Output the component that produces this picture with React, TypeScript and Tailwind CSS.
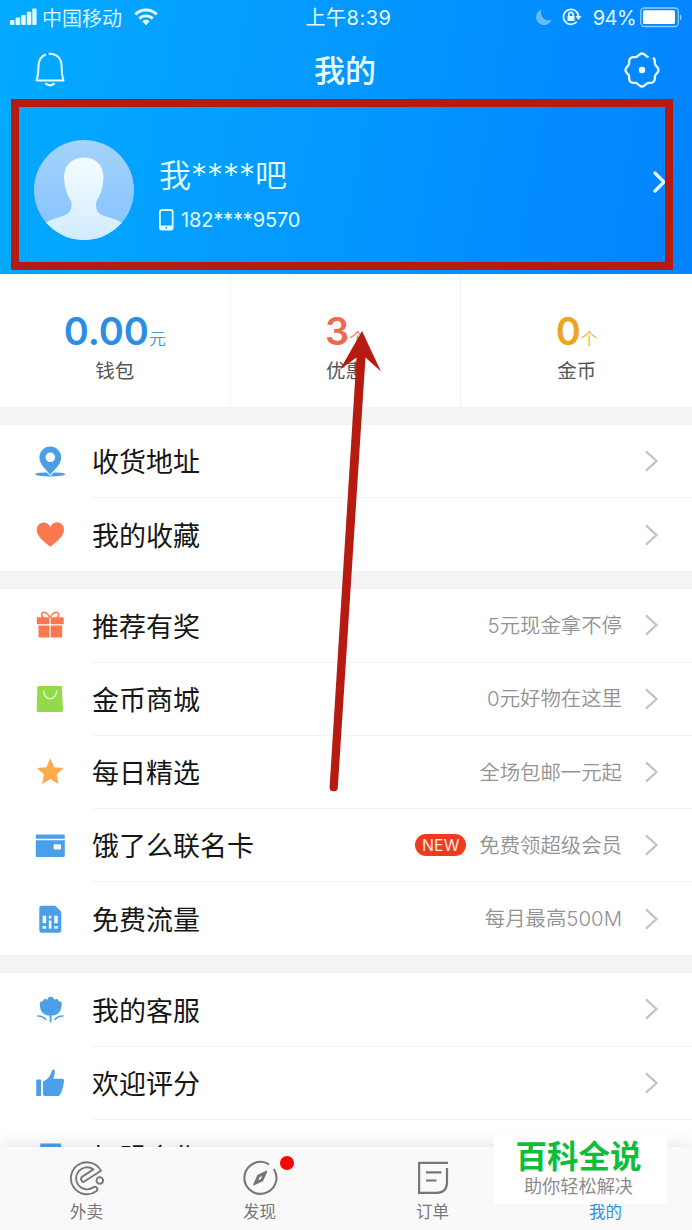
import type { ReactNode } from 'react'

interface MenuItem {
  label: string
  icon: ReactNode
  note?: string
  isNew?: boolean
}

const BLUE = '#4a9fe8'
const CORAL = '#fb7750'

function Glyph({ children, size = 36 }: { children: ReactNode; size?: number }) {
  return (
    <svg width={size} height={size} viewBox="0 0 36 36" fill="none" className="shrink-0">
      {children}
    </svg>
  )
}

const PinIcon = (
  <Glyph>
    <ellipse cx="18.2" cy="30.3" rx="15" ry="2.1" fill={BLUE} />
    <path d="M18.3 32 11 24.6h14.6Z" fill="#fff" />
    <path
      d="M18.3 30.8c-2.2-3.6-10.9-9.8-10.9-17.4a10.9 10.9 0 0 1 21.8 0c0 7.6-8.7 13.8-10.9 17.4Z"
      fill={BLUE}
    />
    <circle cx="18.3" cy="13.3" r="4.8" fill="#fff" />
  </Glyph>
)

const HeartIcon = (
  <Glyph>
    <path
      d="M18.3 29.7C15 26.6 4.7 20.5 4.7 12.7a7 7 0 0 1 13.6-2.5A7 7 0 0 1 32 12.7C32 20.5 21.6 26.6 18.3 29.7Z"
      fill={CORAL}
    />
  </Glyph>
)

const GiftIcon = (
  <Glyph>
    <path
      d="M17.8 9.5c-1.5-3.5-4.5-5.7-6.8-5-2.2.8-1.8 4 .5 5M18.4 9.5c1.5-3.5 4.5-5.7 6.8-5 2.2.8 1.8 4-.5 5"
      stroke={CORAL}
      strokeWidth="1.5"
    />
    <path
      d="M5.7 9.3h11.7v7H4.8v-6a1 1 0 0 1 .9-1ZM18.7 9.3h12a1 1 0 0 1 1 1v6h-13ZM6.500 17.4h10.9v12.1H7.5a1 1 0 0 1-1-1ZM18.7 17.4h11.5v11.1a1 1 0 0 1-1 1H18.7Z"
      fill={CORAL}
    />
  </Glyph>
)

const BagIcon = (
  <Glyph>
    <path d="M6.3 5h23.4l1.4 24.6c0 .8-.5 1.4-1.3 1.4H6c-.8 0-1.3-.6-1.3-1.4L5.4 6Z" fill="#92da48" />
    <path d="M11.5 9.8a6.6 8 0 0 0 13.2 0" stroke="#effcd9" strokeWidth="1.3" strokeLinecap="round" />
  </Glyph>
)

const StarIcon = (
  <Glyph>
    <path
      d="m18.3 4.2 3.9 9 9.5.9-7.1 6.5 2 9.3-8.3-4.9-8.3 4.9 2-9.3-7.2-6.5 9.6-.9Z"
      fill="#fdab4c"
    />
  </Glyph>
)

const CardIcon = (
  <Glyph>
    <path d="M4.8 6.5h27a1 1 0 0 1 1 1v3.2h-29V7.5a1 1 0 0 1 1-1ZM3.8 12.3h29v15.4a1.2 1.2 0 0 1-1.2 1.2H5a1.2 1.2 0 0 1-1.2-1.2Z" fill={BLUE} />
    <rect x="21.7" y="16.2" width="7.3" height="5.2" rx=".6" fill="#f5fbff" />
  </Glyph>
)

const SimIcon = (
  <Glyph>
    <path d="M9.6 4.7h13.6l6.1 6v18.7a2.3 2.3 0 0 1-2.3 2.3H9.6a2.3 2.3 0 0 1-2.3-2.3V7a2.3 2.3 0 0 1 2.3-2.3Z" fill={BLUE} />
    <path
      d="M10.6 14.8h3.6v7.5h-3.6ZM10.6 25h3.6v2.7h-3.6ZM16.8 14.8h2.6v2.8h-2.6ZM16.8 19.5h2.6v8.2h-2.6ZM22.2 14.8h3.6v7.5h-3.6ZM22.2 25h3.6v2.7h-3.6Z"
      fill="#f1faff"
    />
  </Glyph>
)

const TulipIcon = (
  <Glyph>
    <path
      d="M18.7 4.800c1.900 0 3 1.300 3.600 2.900 1.900-1.300 4.100-.9 4.200 1.600 2.300-.1 3.400 1 3.200 3.200-.1 6.300-3.500 10.700-9 11.100h-4c-5.500-.4-8.800-4.800-8.900-11.100-.2-2.200.9-3.300 3.200-3.200.1-2.500 2.300-2.900 4.200-1.600.6-1.600 1.600-2.900 3.500-2.900Z"
      fill={BLUE}
    />
    <path d="M18.6 22v8.300" stroke={BLUE} strokeWidth="1.9" />
    <path d="M5.6 24c3.300-.3 6 1 8.200 3.400M31 24c-3.300-.3-6 1-8.200 3.400" stroke={BLUE} strokeWidth="1.500" strokeLinecap="round" />
  </Glyph>
)

const ThumbIcon = (
  <Glyph>
    <rect x="4.2" y="14.5" width="5" height="16.5" rx="1" fill={BLUE} />
    <path
      d="M11 16.5c4-1.500 7.3-5.2 8.500-9.700.6-2.600 3-3.200 3.200-.8.2 2.700-.6 5.300-1.500 7.700h9c1.400 0 2 1 1.800 2.300-.3 4.500-1.400 8.500-3.400 12.700-.7 1.500-1.700 2.300-3.300 2.300H13.500C12 31 11 30.200 11 28.700Z"
      fill={BLUE}
    />
  </Glyph>
)

const ShopIcon = (
  <Glyph>
    <path d="M8.5 5.500h20.300l1.300 7v18H7.200v-18Z" fill={BLUE} />
  </Glyph>
)

const groups: MenuItem[][] = [
  [
    { label: '收货地址', icon: PinIcon },
    { label: '我的收藏', icon: HeartIcon },
  ],
  [
    { label: '推荐有奖', icon: GiftIcon, note: '5元现金拿不停' },
    { label: '金币商城', icon: BagIcon, note: '0元好物在这里' },
    { label: '每日精选', icon: StarIcon, note: '全场包邮一元起' },
    { label: '饿了么联名卡', icon: CardIcon, note: '免费领超级会员', isNew: true },
    { label: '免费流量', icon: SimIcon, note: '每月最高500M' },
  ],
  [
    { label: '我的客服', icon: TulipIcon },
    { label: '欢迎评分', icon: ThumbIcon },
    { label: '加盟合作', icon: ShopIcon },
  ],
]

const stats = [
  { value: '0.00', unit: '元', label: '钱包', color: 'text-[#2c8de4]' },
  { value: '3', unit: '个', label: '优惠', color: 'text-[#ec6a4f]' },
  { value: '0', unit: '个', label: '金币', color: 'text-[#eda41f]' },
]

// Scalloped outline with eight lobes and a small opening at the upper right
function gearPath() {
  const points: string[] = []
  for (let deg = -48; deg <= 298; deg += 3) {
    const a = (deg * Math.PI) / 180
    const r = 15.4 + 1.1 * Math.cos(8 * a)
    points.push(`${(18 + r * Math.cos(a)).toFixed(2)} ${(18 + r * Math.sin(a)).toFixed(2)}`)
  }
  return `M${points.join('L')}`
}

function StatusBar() {
  return (
    <div className="flex h-[34px] items-center justify-between pr-[9px] pl-[10px] text-[20px] text-[#e4fbff]">
      <div className="flex w-[260px] items-center">
        <svg width="27" height="18" viewBox="0 0 27 18" fill="currentColor">
          <rect x="0" y="12" width="4.5" height="5" rx="1" />
          <rect x="5.6" y="9.5" width="4.5" height="7.500" rx="1" />
          <rect x="11.2" y="7" width="4.5" height="10" rx="1" />
          <rect x="16.8" y="3.7" width="4.5" height="13.3" rx="1" />
          <rect x="22.3" y="0.5" width="4.3" height="16.5" rx="1" />
        </svg>
        <span className="ml-[5px] pt-[3px] font-[350] whitespace-nowrap">中国移动</span>
        <svg width="24" height="18" viewBox="0 0 24 18" className="ml-[12px]" fill="none" stroke="currentColor" strokeWidth="2.9">
          <path d="M1.3 6.4a15.2 15.2 0 0 1 21.4 0" />
          <path d="M5.3 10.6a9.5 9.5 0 0 1 13.400 0" />
          <path d="m12 17.3-3.7-4a5.5 5.5 0 0 1 7.4 0Z" fill="currentColor" stroke="none" />
        </svg>
      </div>
      <span className="pt-[2px] pl-[4px] tracking-[0.5px] whitespace-nowrap">上午8:39</span>
      <div className="flex w-[260px] items-center justify-end">
        <svg width="16" height="16" viewBox="0 0 16 16" fill="#66bcff">
          <path d="M5.5.5A8 8 0 0 0 15.5 11 8 8 0 1 1 5.5.5Z" />
        </svg>
        <svg width="20" height="18" viewBox="0 0 20 18" className="ml-[10px]" fill="none" stroke="currentColor" strokeWidth="1.700">
          <path d="M14.7 13.7A7.5 7.5 0 1 1 16.5 8.5" />
          <path d="M13.5 8h6l-3 4Z" fill="currentColor" stroke="none" />
          <rect x="5.5" y="8" width="7" height="5" fill="currentColor" stroke="none" />
          <path d="M6.8 8.5V6.6a2.2 2.2 0 0 1 4.400 0v1.900" />
        </svg>
        <span className="ml-[11px] pt-[2px] tracking-[-0.6px]">94%</span>
        <svg width="43" height="21" viewBox="0 0 43 21" className="ml-[4px]">
          <rect x=".8" y="1" width="37.5" height="18.5" rx="3.5" fill="none" stroke="#8bceff" strokeWidth="1.3" />
          <rect x="3" y="3.3" width="32" height="13.8" rx="1.5" fill="#fff" />
          <path d="M40 7.5c2 .5 2 5.3 0 5.8Z" fill="#8bceff" />
        </svg>
      </div>
    </div>
  )
}

function NavBar() {
  return (
    <div className="flex h-[72px] items-center justify-between px-8 text-[#eaffff]">
      <Glyph>
        <path
          d="M13.8 2.5C8.5 4.4 6.6 8.5 6.5 14c-.1 6-.3 10-2 14.4h27C29.8 24 29.7 20 29.6 14 29.5 7 25.5 1.5 16.6 1.7"
          stroke="currentColor"
          strokeWidth="2"
          strokeLinejoin="round"
        />
        <path d="M13.5 31.3c2.5 2.700 6.500 2.700 9 0" stroke="currentColor" strokeWidth="2.300" />
      </Glyph>
      <h1 className="-ml-[2px] text-[31px] leading-none font-medium">我的</h1>
      <Glyph>
        <path d={gearPath()} stroke="currentColor" strokeWidth="2.300" strokeLinejoin="round" />
        <circle cx="18" cy="18" r="3.200" fill="currentColor" />
      </Glyph>
    </div>
  )
}

function Profile() {
  return (
    <div className="relative flex h-[168px] items-center pl-[34px]">
      <svg width="100" height="100" viewBox="0 0 100 100" className="shrink-0">
        <defs>
          <linearGradient id="avatar-bg" x1="0" y1="0" x2="0" y2="1">
            <stop offset="0" stopColor="#a5d3fa" />
            <stop offset="1" stopColor="#83c2ff" />
          </linearGradient>
          <linearGradient id="avatar-body" x1="0" y1="0" x2="0" y2="1">
            <stop offset="0" stopColor="#f4fdff" />
            <stop offset="1" stopColor="#d0ebff" />
          </linearGradient>
          <clipPath id="avatar-clip">
            <circle cx="50" cy="50" r="50" />
          </clipPath>
        </defs>
        <circle cx="50" cy="50" r="50" fill="url(#avatar-bg)" />
        <path
          clipPath="url(#avatar-clip)"
          d="M50 17.500c13 0 19.500 9 19.500 20-.2 9-3 18-7 23.500-1.500 8 .5 12 8 15 7 2.500 12 2.500 19 8v20H10V84c7-5.500 12-5.500 19-8 7.500-3 9.500-7 8-15-4-5.500-6.600-14.500-7-23.500 0-11 7-20 20-20Z"
          fill="url(#avatar-body)"
        />
      </svg>
      <div className="ml-[25px] pt-[7px] text-[#e4fbff]">
        <div className="text-[32px] leading-[42px] font-[350] whitespace-nowrap">我****吧</div>
        <div className="mt-[11px] flex h-6 items-center text-[20px]">
          <svg width="15" height="22" viewBox="0 0 15 22">
            <rect x=".9" y="1" width="12.8" height="19.5" rx="2" fill="none" stroke="currentColor" strokeWidth="1.8" />
            <path d="M1 16.500h12.500v3.500H1Z" fill="currentColor" />
            <circle cx="7.3" cy="18.7" r=".9" fill="#1495ff" />
          </svg>
          <span className="ml-[7px] tracking-[-0.15px]">182****9570</span>
        </div>
      </div>
      <svg width="14" height="22" viewBox="0 0 14 22" className="mt-[-16px] mr-[25px] ml-auto">
        <path d="m2 2 9 9-9 9" fill="none" stroke="#e4fbff" strokeWidth="3.200" strokeLinecap="round" />
      </svg>
      {/* Highlight frame */}
      <div className="absolute top-[-7px] left-[11px] h-[171px] w-[662px] border-8 border-[#b61b12]" />
    </div>
  )
}

function StatsRow() {
  return (
    <div className="grid h-[133px] grid-cols-3 divide-x divide-[#f2f2f2] bg-white">
      {stats.map((s) => (
        <div key={s.label} className="flex flex-col items-center pt-[38px]">
          <div className={`flex h-[38px] items-baseline leading-[38px] ${s.color}`}>
            <span className="text-[38px] font-semibold">{s.value}</span>
            <span className="text-[17px] font-[350] opacity-90">{s.unit}</span>
          </div>
          <span className="mt-[7px] text-[19.5px] leading-7 text-[#555]">{s.label}</span>
        </div>
      ))}
    </div>
  )
}

function MenuRow({ item, last }: { item: MenuItem; last: boolean }) {
  return (
    <div className="flex h-[73.2px] items-center pl-8">
      {item.icon}
      <div
        className={`ml-6 flex h-full flex-1 items-center pr-[33px] ${last ? '' : 'border-b border-[#f2f2f2]'}`}
      >
        <span className="pt-[5px] text-[27px] whitespace-nowrap text-[#161616]">{item.label}</span>
        <div className="ml-auto flex items-center">
          {item.isNew && (
            <span className="mr-[13px] flex h-[22px] w-[51px] items-center justify-center rounded-full bg-[#ee3a1f] text-[16px] text-[#ffeae0]">
              NEW
            </span>
          )}
          {item.note && (
            <span className="pt-[2px] text-[20.4px] font-[350] whitespace-nowrap text-[#929292]">{item.note}</span>
          )}
          <svg width="15" height="24" viewBox="0 0 15 24" className="ml-[22px]">
            <path d="m2 2.3 10.500 9.700L2 21.700" fill="none" stroke="#c3c3c6" strokeWidth="2.300" />
          </svg>
        </div>
      </div>
    </div>
  )
}

interface TabProps {
  label: string
  children: ReactNode
  active?: boolean
  badge?: boolean
}

function Tab({ label, children, active, badge }: TabProps) {
  return (
    <div className={`flex flex-col items-center pt-[13px] ${active ? 'text-[#2990e5]' : ''}`}>
      <div className="relative">
        <Glyph>{children}</Glyph>
        {badge && <span className="absolute top-[-4px] right-[-16px] size-[14px] rounded-full bg-[#f90505]" />}
      </div>
      <span className="mt-[5px] text-[16.5px] leading-[22px]">{label}</span>
    </div>
  )
}

function TabBar() {
  return (
    <nav className="absolute inset-x-0 bottom-0 grid h-[83px] grid-cols-4 bg-[#f9f9f9] text-[#777] shadow-[0_-4px_14px_rgba(0,0,0,0.09)]">
      <Tab label="外卖">
        <path
          d="M14.500 22 32 10.800A16 16 0 1 0 27.300 31.200c1.500-1.200 1.300-2.400.4-3.500-.9-1.200-2-1.200-3.400-.3A11 11 0 1 1 24.500 9.400L13.300 16.600c-2 1.500-1.300 3.200-.3 4.600.5.800 1 1 1.500.8Z"
          stroke="currentColor"
          strokeWidth="1.900"
          strokeLinejoin="round"
        />
        <circle cx="30.800" cy="20.500" r="3.300" stroke="currentColor" strokeWidth="1.900" />
      </Tab>
      <Tab label="发现" badge>
        <path d="M31.800 9A16 16 0 1 1 27 4.300" stroke="currentColor" strokeWidth="2.100" />
        <path d="m24.500 11.500-4 9-8.500 4 4-9Z" stroke="currentColor" strokeWidth="1.700" strokeLinejoin="round" fill="currentColor" />
        <path d="m20 16-1.100 3-2.600 1.200 1.200-3Z" fill="#f9f9f9" />
      </Tab>
      <Tab label="订单">
        <path d="M33 2.800H4.100v30h17.500c7 0 10.400-4 10.400-10.500V8" stroke="currentColor" strokeWidth="2.200" />
        <path d="M11 12.300h15.500M11 20.500h10.500" stroke="currentColor" strokeWidth="2.200" />
      </Tab>
      <Tab label="我的" active>
        <circle cx="18" cy="13" r="8" fill="#2990e5" />
      </Tab>
    </nav>
  )
}

export default function App() {
  return (
    <div className="relative h-[1230px] w-[692px] overflow-hidden bg-[#f4f4f4] font-[Inter,'Noto_Sans_CJK_SC',sans-serif]">
      <header className="h-[274px] bg-[linear-gradient(100deg,#03abff_0%,#0498ff_48%,#0383ff_100%)]">
        <StatusBar />
        <NavBar />
        <Profile />
      </header>
      <StatsRow />
      {groups.map((group, i) => (
        <section key={i} className="mt-[18px] bg-white">
          {group.map((item, j) => (
            <MenuRow key={item.label} item={item} last={j === group.length - 1} />
          ))}
        </section>
      ))}
      <TabBar />

      {/* Arrow pointing up to the profile card */}
      <svg width="60" height="470" viewBox="0 0 60 470" className="absolute top-[326px] left-[326px]">
        <path d="m36 5 19 40.500-15.500-14L11.800 461.500a4 4 0 0 1-8.200-.5L30.500 31.500 14 43.500Z" fill="#b61b12" />
      </svg>

      {/* Watermark */}
      <div className="absolute top-[1134px] left-[494px] flex h-[70px] w-[173px] flex-col items-center bg-white pr-[4px]">
        <span className="mt-[5px] text-[31.5px] leading-9 font-bold text-[#10bd37]">百科全说</span>
        <span className="mt-[-1px] text-[18.2px] leading-6 text-[#8c8c8c]">助你轻松解决</span>
      </div>
    </div>
  )
}
